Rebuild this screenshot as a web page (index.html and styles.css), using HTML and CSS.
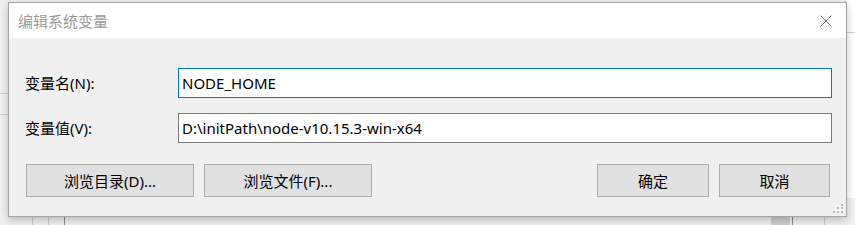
FILE: index.html
```html
<!DOCTYPE html>
<html lang="zh-CN">
<head>
<meta charset="utf-8">
<title>编辑系统变量</title>
<link rel="stylesheet" href="styles.css">
</head>
<body>
<div class="desk">
  <div class="bg-right"></div>
  <div class="bg-line bl1"></div>
  <div class="bg-line bl2"></div>
  <div class="bg-line bl3"></div>
  <div class="bg-vline bv1"></div>
  <div class="bg-vline bv2"></div>
  <div class="bg-vline bv3"></div>
  <div class="bg-vline bv4"></div>
  <div class="bg-vline bv5"></div>
  <div class="bg-block"></div>

  <div class="dialog">
    <div class="titlebar">
      <span class="title">编辑系统变量</span>
      <svg class="close" width="12" height="12" viewBox="0 0 12 12">
        <path d="M0.5 0.5 L11.5 11.5 M11.5 0.5 L0.5 11.5" stroke="#7a7a7a" stroke-width="1" fill="none"/>
      </svg>
    </div>
    <div class="body">
      <div class="fields">
        <label class="label">变量名(N):</label>
        <div class="input focused">NODE_HOME</div>
        <label class="label">变量值(V):</label>
        <div class="input">D:\initPath\node-v10.15.3-win-x64</div>
      </div>
      <div class="buttons">
        <div class="btn wide">浏览目录(D)...</div>
        <div class="btn wide">浏览文件(F)...</div>
        <div class="spacer"></div>
        <div class="btn ok">确定</div>
        <div class="btn cancel">取消</div>
      </div>
    </div>
    <svg class="grip" width="11" height="10" viewBox="0 0 11 10">
      <rect x="8" y="0" width="2" height="2" fill="#bdbdbd"/>
      <rect x="4" y="3" width="2" height="2" fill="#bdbdbd"/>
      <rect x="8" y="3" width="2" height="2" fill="#bdbdbd"/>
      <rect x="0" y="7" width="2" height="2" fill="#bdbdbd"/>
      <rect x="4" y="7" width="2" height="2" fill="#bdbdbd"/>
      <rect x="8" y="7" width="2" height="2" fill="#bdbdbd"/>
    </svg>
  </div>
</div>
</body>
</html>
```

FILE: styles.css
```css
html, body {
  margin: 0;
  padding: 0;
}
body {
  width: 855px;
  height: 225px;
  overflow: hidden;
  background: #f0f0f0;
  font-family: "Noto Sans", "Noto Sans CJK SC", sans-serif;
  font-size: 15px;
  color: #000;
}
.desk {
  position: relative;
  width: 855px;
  height: 225px;
}
.bg-right {
  position: absolute;
  left: 847px;
  top: 0;
  width: 8px;
  height: 198px;
  background: #fff;
}
.bg-line {
  position: absolute;
  height: 1px;
  background: #d0d0d0;
}
.bl1 { left: 0; top: 93px; width: 8px; }
.bl2 { left: 0; top: 114px; width: 8px; }
.bl3 { left: 847px; top: 32px; width: 8px; }
.bg-vline {
  position: absolute;
  width: 1px;
  background: #c8c8c8;
}
.bv1 { left: 32px; top: 210px; height: 15px; }
.bv2 { left: 48px; top: 210px; height: 15px; }
.bv3 { left: 64px; top: 210px; height: 15px; background: #8a8a8a; }
.bv4 { left: 792px; top: 210px; height: 15px; background: #8a8a8a; }
.bv5 { left: 824px; top: 210px; height: 15px; }
.bg-block {
  position: absolute;
  left: 771px;
  top: 210px;
  width: 19px;
  height: 15px;
  background: #cfcfcf;
}

.dialog {
  position: absolute;
  left: 8px;
  top: 2px;
  width: 839px;
  height: 215px;
  box-sizing: border-box;
  border: 1px solid #a6a6a6;
  background: #f0f0f0;
  box-shadow: 0 3px 8px rgba(0, 0, 0, 0.22);
  display: flex;
  flex-direction: column;
}
.titlebar {
  height: 35px;
  background: #fff;
  display: flex;
  align-items: center;
  padding-left: 9px;
  padding-right: 14px;
}
.title {
  flex: 1;
  color: #9a9a9a;
  font-size: 15px;
  line-height: 20px;
}
.close {
  display: block;
}
.body {
  flex: 1;
  padding: 30px 14px 0 16px;
}
.fields {
  display: grid;
  grid-template-columns: 153px 1fr;
  row-gap: 15px;
  align-items: center;
}
.label {
  line-height: 20px;
}
.input {
  height: 30px;
  box-sizing: border-box;
  border: 1px solid #7a7a7a;
  background: #fff;
  padding-left: 3px;
  line-height: 28px;
  white-space: nowrap;
}
.input.focused {
  border-color: #0078d7;
}
.buttons {
  display: flex;
  gap: 10px;
  margin: 21px 2px 0 1px;
}
.spacer {
  flex: 1;
}
.btn {
  height: 33px;
  box-sizing: border-box;
  border: 1px solid #adadad;
  background: #e1e1e1;
  display: flex;
  align-items: center;
  justify-content: center;
  line-height: 20px;
}
.btn.wide { width: 168px; }
.btn.ok { width: 112px; }
.btn.cancel { width: 111px; }
.grip {
  position: absolute;
  right: 2px;
  bottom: 2px;
}
```
